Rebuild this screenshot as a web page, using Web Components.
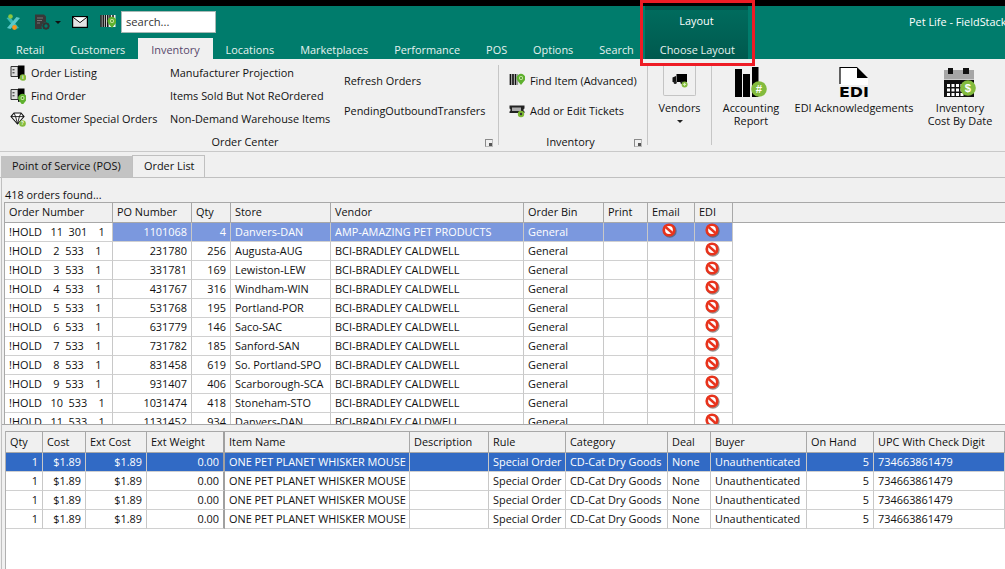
<!DOCTYPE html>
<html>
<head>
<meta charset="utf-8">
<title>Order List</title>
<style>
  html, body { margin: 0; padding: 0; width: 1005px; height: 569px; overflow: hidden; background: #f0f0f0; }
  body { font: 10.9px "Open Sans", "Noto Sans", sans-serif; color: #111; }
</style>
</head>
<body>
<pos-app></pos-app>
<script>
const PIN = (x, y) => `<path d="M${x} ${y + 7} l-3.4 -4.2 a4.3 4.3 0 1 1 6.8 0z" fill="#5fb12f"/><circle cx="${x}" cy="${y}" r="2" fill="#cfe9a8"/><circle cx="${x}" cy="${y}" r="1" fill="#3f8f1c"/>`;
const BADGE = (cx, cy, r, t) => `<circle cx="${cx}" cy="${cy}" r="${r}" fill="#83bb3d"/><text x="${cx}" y="${cy + r * 0.52}" text-anchor="middle" font-family="Liberation Sans, sans-serif" font-weight="700" font-size="${r * 1.45}" fill="#fff">${t}</text>`;
const BOX = `<path d="M1 1.5h7v10H1z" fill="#ddd" stroke="#333"/><path d="M8 .5h6.5v11.5L8 14z" fill="#000"/><rect x="2.5" y="4" width="2" height="1.4" fill="#555"/><rect x="2.5" y="7" width="2" height="1.4" fill="#555"/>`;
let calCells = '';
[17, 21.5, 26].forEach(y => [3, 7.5, 12, 16.5].forEach(x => { calCells += `<rect x="${x}" y="${y}" width="3" height="3" fill="#fff"/>`; }));
const ICONS = {
  logo: [16, `<path d="M1.5 4 L5 3 L14 14 L10.5 15z" fill="#37b8b4"/><path d="M15 4 L11.5 3 L2 14 L5.5 15z" fill="#5ac8c8"/><circle cx="5.5" cy="2.5" r="2.3" fill="#8cc63f"/><circle cx="9.5" cy="13.5" r="2.4" fill="#f7941d"/>`],
  docgear: [16, `<path d="M1 .5h9l2 2v5.5a5 5 0 0 0-4 7H1z" fill="#383838"/><path d="M3 4h6M3 6.5h5M3 9h3" stroke="#777" stroke-width="1"/><circle cx="12" cy="12" r="2.6" fill="none" stroke="#333" stroke-width="1.8"/><path d="M12 8.4v1.4M12 14.2v1.4M8.4 12h1.4M14.2 12h1.4M9.5 9.5l1 1M13.5 13.5l1 1M14.5 9.5l-1 1M10.5 13.5l-1 1" stroke="#333" stroke-width="1.2"/>`],
  mail: [16, `<rect x="0" y="2" width="16" height="12" fill="#000"/><path d="M1.2 3.4h13.6v9.4H1.2z" fill="#e4e4e4"/><path d="M1 3.2 L8 8.6 L15 3.2" fill="#fff" stroke="#111" stroke-width="1"/>`],
  barcode: [16, `<rect x=".5" y="1" width="15" height="12" fill="#f2f2f2"/><path d="M1 1v12M3.2 1v12M5.4 1v12M7.8 1v12" stroke="#111" stroke-width="1.5"/><path d="M10 1v3M13 1v3" stroke="#111" stroke-width="1.5"/>${PIN(12, 7)}`],
  order: [16, `${BOX}${BADGE(13, 12.5, 3.3, 'i')}`],
  find: [16, `${BOX}${PIN(12.5, 10)}`],
  gem: [16, `<path d="M4 2h7l3 3.6L7.5 13 1 5.6z" fill="#fff" stroke="#111" stroke-width="1.1"/><path d="M1 5.6h13M4 2l1.6 3.6 1.9 7.4 1.9-7.4L11 2" fill="none" stroke="#111" stroke-width=".9"/>${BADGE(12.5, 12.5, 3.3, '?')}`],
  pinbars: [16, `<path d="M1.5 2v11M4 2v11M6.5 2v11" stroke="#111" stroke-width="1.7"/><path d="M8.6 2v11" stroke="#999" stroke-width="1"/>${PIN(12, 6)}`],
  ticket: [16, `<path d="M.5 3.5h15v3a1.6 1.6 0 0 0 0 3v1.5H.5V9.5a1.6 1.6 0 0 0 0-3z" fill="#222"/><rect x="3" y="5.5" width="9" height="3.5" fill="#aaa"/><circle cx="12" cy="12" r="3.2" fill="#7cb832"/><circle cx="12" cy="12" r="1.2" fill="#333"/>`],
  truck: [16, `<rect x="4.5" y="2" width="10.5" height="8" fill="#000"/><path d="M.5 5.5 L4 4 V10 H.5z" fill="#111"/><circle cx="3.2" cy="10.5" r="1.6" fill="#222"/><circle cx="10" cy="10.5" r="1.6" fill="#222"/><circle cx="12.6" cy="12.4" r="3" fill="#83bb3d"/><path d="M12.6 10.9v3M11.1 12.4h3" stroke="#dff0c4" stroke-width="1"/>`],
  bars: [32, `<rect x="0" y="2" width="7" height="28" fill="#000"/><rect x="8" y="7" width="7" height="23" fill="#000"/><rect x="17" y="0" width="6.5" height="30" fill="#000"/>${BADGE(24, 22, 7.8, '#')}`],
  edi: [32, `<path d="M2 0h17l11 11v7H2z" fill="#fff"/><path d="M2 17V.5h17" fill="none" stroke="#000" stroke-width="1.2"/><path d="M19 0l11 11H19z" fill="#000"/><text x="16" y="29.5" text-anchor="middle" font-family="DejaVu Sans, sans-serif" font-weight="700" font-size="14.5" textLength="30" lengthAdjust="spacingAndGlyphs" fill="#000">EDI</text>`],
  cal: [32, `<rect x="0" y="3" width="30" height="9.5" fill="#a6a6a6"/><rect x="4" y="1" width="5" height="6" fill="#111"/><rect x="19" y="1" width="6" height="6" fill="#111"/><rect x="0" y="13" width="30" height="17" fill="#111"/>${calCells}${BADGE(24, 21, 7.8, '$')}`],
  stop: [16, `<circle cx="8.9" cy="8.9" r="6.8" fill="#444" opacity=".55"/><circle cx="8" cy="8" r="6.6" fill="#e8331c"/><circle cx="8" cy="8" r="3.9" fill="#fff"/><path d="M4.6 5 L11.4 11" stroke="#e8331c" stroke-width="2.4"/>`]
};

function iconSvg(name, size) {
  const [box, body] = ICONS[name];
  return `<svg xmlns="http://www.w3.org/2000/svg" width="${size || box}" height="${size || box}" viewBox="0 0 ${box} ${box}" style="display:block">${body}</svg>`;
}

class RbIcon extends HTMLElement {
  connectedCallback() {
    this.attachShadow({ mode: 'open' });
    const size = this.getAttribute('size');
    this.shadowRoot.innerHTML = `
      <style>:host { display: block; flex: none; }</style>
      ${iconSvg(this.getAttribute('name'), size)}
    `;
  }
}
customElements.define('rb-icon', RbIcon);

class TitleBar extends HTMLElement {
  connectedCallback() {
    this.attachShadow({ mode: 'open' });
    this.shadowRoot.innerHTML = `
      <style>
        :host { display: block; position: relative; height: 53px; background: #007c6c; color: #fff; }
        .row { display: flex; align-items: center; height: 32px; }
        rb-icon.logo { margin-left: 5px; }
        rb-icon.doc { margin-left: 13px; }
        .caret { width: 0; height: 0; margin: 0 0 0 5px; border: 3px solid transparent; border-top-color: #111; border-bottom: 0; }
        rb-icon.mail { margin-left: 11px; }
        rb-icon.code { margin-left: 12px; }
        .search { margin-left: 5px; box-sizing: border-box; width: 95px; height: 22px; background: #fff; border: 1px solid #a9b9b5; color: #333; font-size: 11.2px; line-height: 20px; padding-left: 4px; }
        .title { position: absolute; left: 909px; top: 7px; line-height: 18px; white-space: nowrap; }
        .context { position: absolute; left: 645px; top: 0; width: 103px; height: 53px; background: linear-gradient(#006b5d, #00594e); border-top: 4px solid #00574c; box-sizing: border-box; text-align: center; line-height: 22px; }
        .tabs { display: flex; height: 21px; padding-left: 3px; position: relative; }
        .tab { padding: 0 13px; line-height: 24px; color: #e6f2ef; white-space: nowrap; }
        .tab.on { background: #f0f0f0; color: #57476b; }
      </style>
      <div class="row">
        <rb-icon class="logo" name="logo"></rb-icon>
        <rb-icon class="doc" name="docgear"></rb-icon>
        <span class="caret"></span>
        <rb-icon class="mail" name="mail"></rb-icon>
        <rb-icon class="code" name="barcode"></rb-icon>
        <div class="search">search...</div>
      </div>
      <div class="context">Layout</div>
      <div class="title">Pet Life - FieldStack</div>
      <div class="tabs">
        <span class="tab">Retail</span>
        <span class="tab">Customers</span>
        <span class="tab on">Inventory</span>
        <span class="tab">Locations</span>
        <span class="tab">Marketplaces</span>
        <span class="tab">Performance</span>
        <span class="tab">POS</span>
        <span class="tab">Options</span>
        <span class="tab">Search</span>
        <span class="tab">Choose Layout</span>
      </div>
    `;
  }
}
customElements.define('title-bar', TitleBar);

class RibbonItem extends HTMLElement {
  connectedCallback() {
    this.attachShadow({ mode: 'open' });
    const icon = this.getAttribute('icon');
    this.shadowRoot.innerHTML = `
      <style>
        :host { display: flex; align-items: center; gap: 5px; white-space: nowrap; height: var(--item-h, 23px); }
      </style>
      ${icon ? iconSvg(icon, 16) : ''}
      <slot></slot>
    `;
  }
}
customElements.define('ribbon-item', RibbonItem);

class RibbonGroup extends HTMLElement {
  connectedCallback() {
    this.attachShadow({ mode: 'open' });
    const launcher = this.hasAttribute('launcher');
    this.shadowRoot.innerHTML = `
      <style>
        :host { display: block; position: relative; box-sizing: border-box; height: 92px; flex: none; }
        :host::after { content: ""; position: absolute; right: 0; top: 6px; bottom: 6px; width: 1px; background: #c6c6c6; }
        .body { display: flex; height: 72px; }
        .name { position: absolute; left: 0; right: var(--name-pad, 0); top: 74px; text-align: center; line-height: 18px; }
        .launch { position: absolute; right: 6px; top: 80px; width: 6px; height: 6px; border: 1px solid #8a8a8a; border-right-color: #bbb; border-bottom-color: #bbb; }
        .launch::after { content: ""; position: absolute; right: 0; bottom: 0; width: 3px; height: 3px; background: #555; }
      </style>
      <div class="body"><slot></slot></div>
      <div class="name">${this.getAttribute('name') || ''}</div>
      ${launcher ? '<div class="launch"></div>' : ''}
    `;
  }
}
customElements.define('ribbon-group', RibbonGroup);

class RibbonLarge extends HTMLElement {
  connectedCallback() {
    this.attachShadow({ mode: 'open' });
    this.shadowRoot.innerHTML = `
      <style>
        :host { display: flex; flex-direction: column; align-items: center; box-sizing: border-box; text-align: center; padding-top: 8px; line-height: 13px; white-space: nowrap; }
        .ic { height: 32px; margin-bottom: 2px; }
      </style>
      <div class="ic">${iconSvg(this.getAttribute('icon'), 32)}</div>
      <slot></slot>
    `;
  }
}
customElements.define('ribbon-large', RibbonLarge);

class OrderRibbon extends HTMLElement {
  connectedCallback() {
    this.attachShadow({ mode: 'open' });
    this.shadowRoot.innerHTML = `
      <style>
        :host { display: flex; height: 92px; background: #f0f0f0; border-bottom: 1px solid #c9c9c9; }
        .col { padding-top: 2px; }
        .col.two { padding-top: 6px; --item-h: 30px; }
        .vendor { display: flex; flex-direction: column; align-items: center; width: 63px; padding-top: 7px; line-height: 13px; }
        .vbox { box-sizing: border-box; width: 33px; height: 31px; border: 1px solid #c4c4c4; border-top: 0; border-radius: 0 0 2px 2px; display: flex; align-items: center; justify-content: center; margin-bottom: 5px; margin-top: -1px; }
        .drop { width: 0; height: 0; border: 3px solid transparent; border-top-color: #222; border-bottom: 0; margin-top: 6px; }
      </style>
      <ribbon-group name="Order Center" launcher style="width:499px;--name-pad:9px">
        <div class="col" style="margin-left:10px;width:160px">
          <ribbon-item icon="order">Order Listing</ribbon-item>
          <ribbon-item icon="find">Find Order</ribbon-item>
          <ribbon-item icon="gem">Customer Special Orders</ribbon-item>
        </div>
        <div class="col" style="width:174px">
          <ribbon-item>Manufacturer Projection</ribbon-item>
          <ribbon-item>Items Sold But Not ReOrdered</ribbon-item>
          <ribbon-item>Non-Demand Warehouse Items</ribbon-item>
        </div>
        <div class="col two">
          <ribbon-item>Refresh Orders</ribbon-item>
          <ribbon-item>PendingOutboundTransfers</ribbon-item>
        </div>
      </ribbon-group>
      <ribbon-group name="Inventory" launcher style="width:149px;--name-pad:6px">
        <div class="col two" style="margin-left:10px">
          <ribbon-item icon="pinbars">Find Item (Advanced)</ribbon-item>
          <ribbon-item icon="ticket">Add or Edit Tickets</ribbon-item>
        </div>
      </ribbon-group>
      <ribbon-group style="width:64px">
        <div class="vendor">
          <div class="vbox">${iconSvg('truck', 16)}</div>
          <span>Vendors</span>
          <span class="drop"></span>
        </div>
      </ribbon-group>
      <ribbon-large icon="bars" style="width:78px">Accounting<br>Report</ribbon-large>
      <ribbon-large icon="edi" style="width:128px">EDI Acknowledgements</ribbon-large>
      <ribbon-large icon="cal" style="width:84px">Inventory<br>Cost By Date</ribbon-large>
    `;
  }
}
customElements.define('order-ribbon', OrderRibbon);

class DocTabs extends HTMLElement {
  connectedCallback() {
    this.attachShadow({ mode: 'open' });
    this.shadowRoot.innerHTML = `
      <style>
        :host { display: flex; align-items: flex-end; height: 26px; padding-left: 1px; box-sizing: border-box; border-bottom: 1px solid #c0c0c0; background: #f0f0f0; }
        span { box-sizing: border-box; height: 21px; line-height: 20px; white-space: nowrap; }
        .off { width: 131px; background: #c3c3c3; padding-left: 11px; }
        .on { width: 73px; height: 22px; padding-left: 11px; border: 1px solid #c0c0c0; border-bottom: 0; background: #f0f0f0; }
      </style>
      <span class="off">Point of Service (POS)</span>
      <span class="on">Order List</span>
    `;
  }
}
customElements.define('doc-tabs', DocTabs);

class DataGrid extends HTMLElement {
  set data(d) {
    this.attachShadow({ mode: 'open' });
    const cols = d.columns;
    const sum = cols.reduce((a, c) => a + c.w, 0);
    const head = cols.map(c => `<th style="width:${c.w}px" class="${c.thick ? 'thick' : ''}">${c.t}</th>`).join('');
    const body = d.rows.map((r, i) => {
      const tds = r.map((v, j) => {
        const c = cols[j];
        const cls = [c.right ? 'r' : '', c.thick ? 'thick' : '', i === 0 && !(d.skipFirst && j === 0) ? 'sel' : ''].join(' ');
        const val = v === '!' ? iconSvg('stop', 16) : v;
        return `<td class="${cls} ${v === '!' ? 'ic' : ''}">${val}</td>`;
      }).join('');
      return `<tr>${tds}</tr>`;
    }).join('');
    const hh = d.headHeight;
    this.shadowRoot.innerHTML = `
      <style>
        :host { display: block; overflow: hidden; background: #fff; --sel: ${d.sel}; }
        table { border-collapse: separate; border-spacing: 0; table-layout: fixed; width: ${sum}px; }
        th, td { box-sizing: border-box; padding: 0 4px 1px; white-space: pre; overflow: hidden; text-align: left; font-weight: 400; border-right: 1px solid #c8c8c8; }
        th { height: ${hh}px; padding-bottom: 2px; padding-top: ${hh - 20}px; border-bottom: 1px solid #a8a8a8; border-right-color: #a8a8a8; background: #f0f0f0; }
        td { height: 19px; border-bottom: 1px solid #d0d0d0; }
        td.r { text-align: right; }
        td.thick, th.thick { border-right: 2px solid #a0a0a0; }
        td.sel { background: var(--sel); color: #fff; }
        td.ic { padding: 0; overflow: visible; }
        td.ic svg { margin: 0 auto; transform: translate(-2px, -2px); }
        .wrap { background: linear-gradient(#f0f0f0 ${hh - 1}px, #a8a8a8 ${hh - 1}px, #a8a8a8 ${hh}px, transparent ${hh}px); border-top: 1px solid #a8a8a8; }
      </style>
      <div class="wrap">
        <table>
          <thead><tr>${head}</tr></thead>
          <tbody>${body}</tbody>
        </table>
      </div>
    `;
  }
}
customElements.define('data-grid', DataGrid);

const STORES = [
  ['!HOLD   11  301    1', '1101068', '4', 'Danvers-DAN', 'AMP-AMAZING PET PRODUCTS'],
  ['!HOLD    2  533    1', '231780', '256', 'Augusta-AUG'],
  ['!HOLD    3  533    1', '331781', '169', 'Lewiston-LEW'],
  ['!HOLD    4  533    1', '431767', '316', 'Windham-WIN'],
  ['!HOLD    5  533    1', '531768', '195', 'Portland-POR'],
  ['!HOLD    6  533    1', '631779', '146', 'Saco-SAC'],
  ['!HOLD    7  533    1', '731782', '185', 'Sanford-SAN'],
  ['!HOLD    8  533    1', '831458', '619', 'So. Portland-SPO'],
  ['!HOLD    9  533    1', '931407', '406', 'Scarborough-SCA'],
  ['!HOLD   10  533    1', '1031474', '418', 'Stoneham-STO'],
  ['!HOLD   11  533    1', '1131452', '934', 'Danvers-DAN']
];

class PosApp extends HTMLElement {
  connectedCallback() {
    this.attachShadow({ mode: 'open' });
    this.shadowRoot.innerHTML = `
      <style>
        :host { display: flex; flex-direction: column; position: relative; width: 1005px; height: 569px; overflow: hidden; }
        .black { height: 6px; background: #000; flex: none; }
        .panel { flex: 1; display: flex; flex-direction: column; min-height: 0; border-left: 1px solid #c0c0c0; margin-left: 1px; padding-left: 2px; }
        .found { height: 24px; line-height: 34px; padding-left: 1px; white-space: nowrap; flex: none; }
        #top { height: 222px; flex: none; border-left: 1px solid #a8a8a8; }
        .split { flex: none; height: 7px; border-top: 1px solid #a8a8a8; box-sizing: border-box; background: #f0f0f0; margin-left: -2px; }
        .lower { flex: 1; background: #fff; border-left: 1px solid #b0b0b0; margin-left: 1px; }
        .red { position: absolute; left: 640px; top: 0; width: 115px; height: 66px; box-sizing: border-box; border: 3px solid #ee1c25; }
      </style>
      <div class="black"></div>
      <title-bar></title-bar>
      <order-ribbon></order-ribbon>
      <doc-tabs></doc-tabs>
      <div class="panel">
        <div class="found">418 orders found...</div>
        <data-grid id="top"></data-grid>
        <div class="split"></div>
        <div class="lower"><data-grid id="bottom"></data-grid></div>
      </div>
      <div class="red"></div>
    `;
    this.shadowRoot.getElementById('top').data = {
      sel: '#7b98de',
      skipFirst: true,
      headHeight: 20,
      columns: [
        { t: 'Order Number', w: 108 }, { t: 'PO Number', w: 79 }, { t: 'Qty', w: 39 },
        { t: 'Store', w: 100 }, { t: 'Vendor', w: 193 }, { t: 'Order Bin', w: 80 },
        { t: 'Print', w: 44 }, { t: 'Email', w: 47 }, { t: 'EDI', w: 38 }
      ].map((c, i) => (i === 1 || i === 2 ? { ...c, right: true } : c)),
      rows: STORES.map((s, i) => [s[0], s[1], s[2], s[3], s[4] || 'BCI-BRADLEY CALDWELL', 'General', '', i === 0 ? '!' : '', '!'])
    };
    const row = ['1', '$1.89', '$1.89', '0.00', 'ONE PET PLANET WHISKER MOUSE', '', 'Special Order', 'CD-Cat Dry Goods', 'None', 'Unauthenticated', '5', '734663861479'];
    this.shadowRoot.getElementById('bottom').data = {
      sel: '#316ac5',
      headHeight: 21,
      columns: [
        { t: 'Qty', w: 37, right: true }, { t: 'Cost', w: 43, right: true }, { t: 'Ext Cost', w: 61, right: true },
        { t: 'Ext Weight', w: 78, right: true, thick: true }, { t: 'Item Name', w: 185 }, { t: 'Description', w: 79 },
        { t: 'Rule', w: 77 }, { t: 'Category', w: 102 }, { t: 'Deal', w: 43 }, { t: 'Buyer', w: 96 },
        { t: 'On Hand', w: 67, right: true }, { t: 'UPC With Check Digit', w: 131 }
      ],
      rows: [row, row, row, row]
    };
  }
}
customElements.define('pos-app', PosApp);
</script>
</body>
</html>
